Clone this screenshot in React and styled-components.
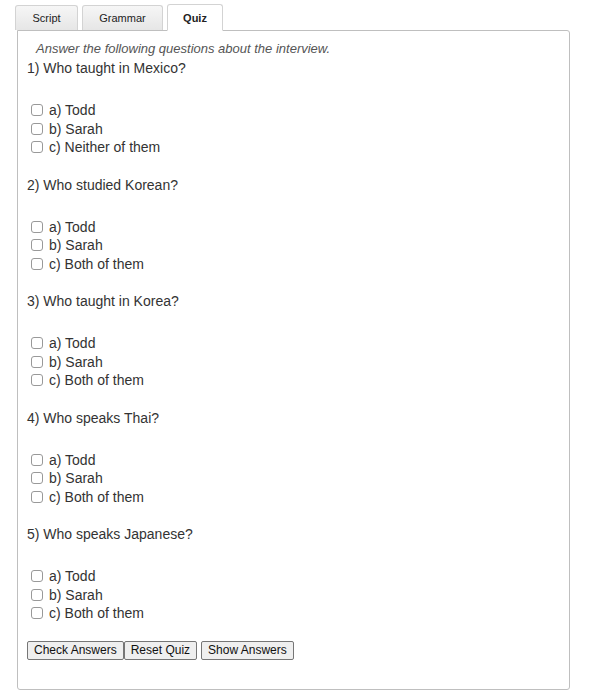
import styled, { createGlobalStyle } from "styled-components";

const GlobalStyle = createGlobalStyle`
  body {
    margin: 0;
    background: #fff;
    font-family: "Liberation Sans", Arial, sans-serif;
    color: #333;
  }
`;

const Page = styled.div`
  padding: 4px 22px 9px 15px;
`;

const TabBar = styled.div`
  display: flex;
  align-items: flex-end;
  gap: 4px;
  height: 26px;
  position: relative;
  z-index: 1;
`;

const Tab = styled.div`
  display: flex;
  align-items: center;
  justify-content: center;
  box-sizing: border-box;
  width: ${(p) => p.$width}px;
  height: ${(p) => (p.$active ? 27 : 25)}px;
  margin-bottom: ${(p) => (p.$active ? -1 : 0)}px;
  border: 1px solid #d3d3d3;
  border-bottom: ${(p) => (p.$active ? "1px solid #fff" : "none")};
  border-radius: 3px 3px 0 0;
  background: ${(p) =>
    p.$active ? "#fff" : "linear-gradient(#f6f6f6, #e6e6e6)"};
  font-size: 11px;
  font-weight: ${(p) => (p.$active ? "bold" : "normal")};
  color: #222;
`;

const Panel = styled.div`
  margin-left: 2px;
  height: 660px;
  box-sizing: border-box;
  border: 1px solid #bfbfbf;
  border-radius: 0 3px 3px 3px;
  padding: 10px 9px 0 9px;
`;

const Intro = styled.div`
  font-size: 13px;
  font-style: italic;
  color: #555;
  padding-left: 9px;
  line-height: 15px;
`;

const Question = styled.div`
  font-size: 14px;
  line-height: 18px;
  margin-top: ${(p) => (p.$first ? 3 : 19)}px;
  margin-bottom: 24px;
`;

const Option = styled.label`
  display: flex;
  align-items: center;
  height: 18.5px;
  font-size: 14px;
  padding-left: 3px;
`;

const Box = styled.input`
  appearance: none;
  box-sizing: border-box;
  width: 12px;
  height: 12px;
  margin: 0 6px 0 1px;
  border: 1px solid #999;
  border-radius: 3px;
  background: #fff;
`;

const Buttons = styled.div`
  display: flex;
  margin-top: 18px;
`;

const Button = styled.button`
  font-family: "Liberation Sans", Arial, sans-serif;
  font-size: 12px;
  color: #111;
  height: 19px;
  padding: 0 6px;
  margin-right: ${(p) => p.$gap || 0}px;
  border: 1px solid #767676;
  border-radius: 2px;
  background: #efefef;
`;

const questions = [
  { q: "1) Who taught in Mexico?", c: "c) Neither of them" },
  { q: "2) Who studied Korean?", c: "c) Both of them" },
  { q: "3) Who taught in Korea?", c: "c) Both of them" },
  { q: "4) Who speaks Thai?", c: "c) Both of them" },
  { q: "5) Who speaks Japanese?", c: "c) Both of them" },
];

export default function App() {
  return (
    <Page>
      <GlobalStyle />
      <TabBar>
        <Tab $width={63}>Script</Tab>
        <Tab $width={81}>Grammar</Tab>
        <Tab $width={56} $active>
          Quiz
        </Tab>
      </TabBar>
      <Panel>
        <Intro>Answer the following questions about the interview.</Intro>
        {questions.map((item, i) => (
          <div key={i}>
            <Question $first={i === 0}>{item.q}</Question>
            <Option>
              <Box type="checkbox" />
              a) Todd
            </Option>
            <Option>
              <Box type="checkbox" />
              b) Sarah
            </Option>
            <Option>
              <Box type="checkbox" />
              {item.c}
            </Option>
          </div>
        ))}
        <Buttons>
          <Button>Check Answers</Button>
          <Button $gap={4}>Reset Quiz</Button>
          <Button>Show Answers</Button>
        </Buttons>
      </Panel>
    </Page>
  );
}
